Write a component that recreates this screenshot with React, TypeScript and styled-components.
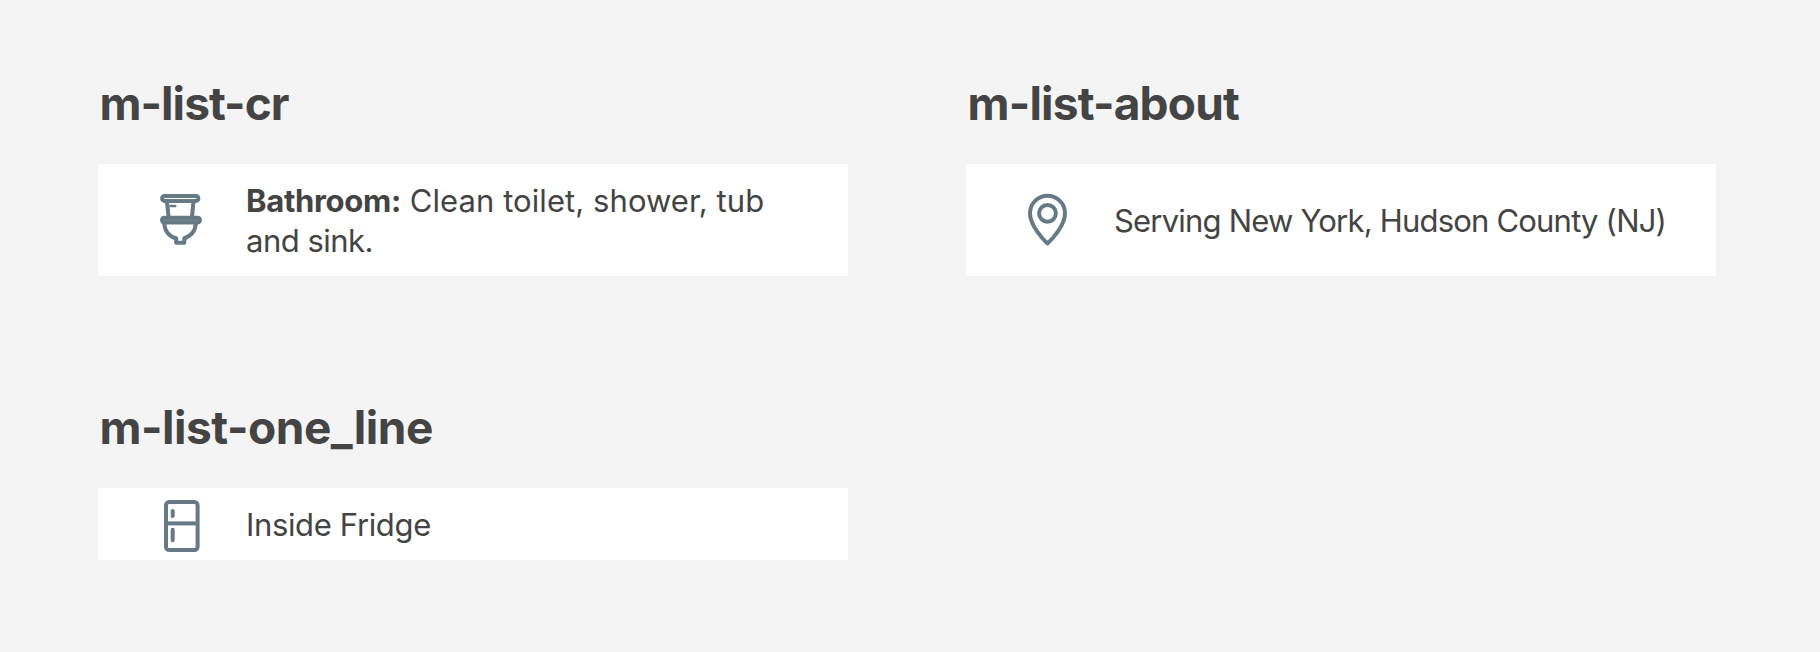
import styled, { createGlobalStyle } from 'styled-components';

const GlobalStyle = createGlobalStyle`
  body { margin: 0; background: #f4f4f4; color: #444; font-family: Inter, "Liberation Sans", sans-serif; }
`;

const Page = styled.main`
  box-sizing: border-box;
  width: 1820px;
  height: 652px;
  padding: 73px 98px 0;
  display: grid;
  grid-template-columns: 750px 750px;
  grid-template-rows: 203px 203px;
  gap: 121px 118px;
`;

const Title = styled.h2<{ $tracking: number }>`
  margin: 0 0 31px 1.5px;
  font-size: 46px;
  line-height: 60px;
  font-weight: 650;
  letter-spacing: ${p => p.$tracking}px;
  white-space: nowrap;
`;

const Card = styled.div<{ $height: number }>`
  box-sizing: border-box;
  height: ${p => p.$height}px;
  padding-left: 52px;
  display: flex;
  align-items: center;
  gap: 36px;
  background: #fff;
`;

const Icon = styled.svg`
  flex: none;
  width: 60px;
  height: 72px;
  fill: none;
  stroke: #667a86;
  stroke-width: 4;
`;

const Text = styled.p`
  margin: 0;
  padding-top: 2px;
  font-size: 31px;
  line-height: 40px;
  white-space: nowrap;
`;

const Run = styled.span<{ $tracking: number }>`
  letter-spacing: ${p => p.$tracking}px;
`;

const Strong = styled.strong`
  font-weight: 650;
  letter-spacing: -0.3px;
`;

const Toilet = () => (
  <Icon viewBox="0 0 60 72">
    <rect x="12.1" y="12" width="36.3" height="4.9" rx="2.4" />
    <path d="M17 18l1.6 15M43.4 18l-1.4 15" />
    <path d="M20.6 22h4.6" strokeWidth="2.7" strokeLinecap="round" />
    <rect x="12" y="33.7" width="38" height="4.7" rx="2.3" fill="#7f9096" />
    <path d="M14.3 39.5C14.5 46.5 19 53 26.2 54.2V58.7H34.3V54.2C41 52.5 45.7 46.5 45.7 39.5" strokeLinejoin="round" />
  </Icon>
);

const Pin = () => (
  <Icon viewBox="0 0 60 72">
    <path d="M29.5 59.5C25 55.5 12 41.5 12 29.2a17.5 17.5 0 0 1 35 0C47 41.5 34 55.5 29.5 59.5z" strokeLinejoin="round" />
    <circle cx="29.5" cy="29.3" r="8.4" />
  </Icon>
);

const Fridge = () => (
  <Icon viewBox="0 0 60 72">
    <rect x="16" y="14" width="31.6" height="48" rx="3.3" />
    <path d="M16 35.4h31.6" />
    <path d="M22.7 23v5M22.7 41.7v10.6" strokeLinecap="round" />
  </Icon>
);

export default function App() {
  return (
    <>
      <GlobalStyle />
      <Page>
        <section>
          <Title $tracking={-0.95}>m-list-cr</Title>
          <Card $height={112}>
            <Toilet />
            <Text>
              <Strong>Bathroom:</Strong> <Run $tracking={0.07}>Clean toilet, shower, tub</Run>
              <br />
              <Run $tracking={-0.5}>and sink.</Run>
            </Text>
          </Card>
        </section>
        <section>
          <Title $tracking={-0.8}>m-list-about</Title>
          <Card $height={112}>
            <Pin />
            <Text><Run $tracking={-0.8}>Serving New York, Hudson County (NJ)</Run></Text>
          </Card>
        </section>
        <section>
          <Title $tracking={-0.47}>m-list-one_line</Title>
          <Card $height={72}>
            <Fridge />
            <Text><Run $tracking={-0.35}>Inside Fridge</Run></Text>
          </Card>
        </section>
      </Page>
    </>
  );
}
